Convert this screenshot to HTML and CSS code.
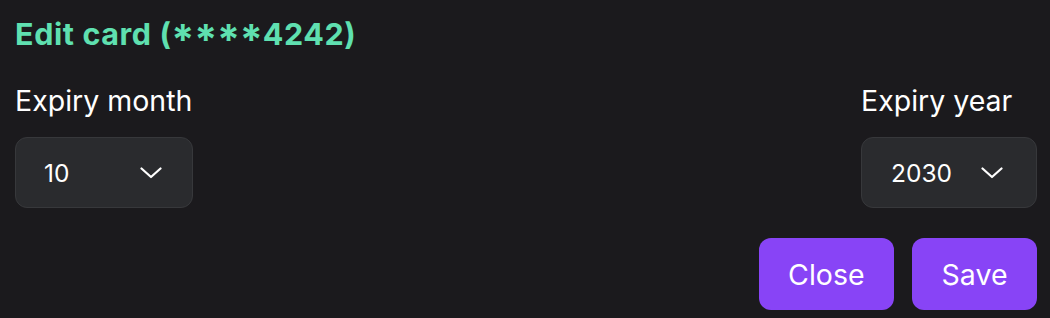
FILE: index.html
```html
<!DOCTYPE html>
<html lang="en">
<head>
<meta charset="utf-8">
<title>Edit card</title>
<link rel="stylesheet" href="styles.css">
</head>
<body>
<div class="dialog">
  <h1 class="title">Edit card (<span class="mask">****</span>4242)</h1>
  <div class="fields">
    <div class="field">
      <label class="label">Expiry month</label>
      <div class="select select-month">
        <span class="value">10</span>
        <svg class="chev" viewBox="0 0 22 12" width="22" height="12"><path d="M1.5 1.5 L11 10 L20.5 1.5" fill="none" stroke="#fff" stroke-width="2.2" stroke-linecap="round" stroke-linejoin="round"/></svg>
      </div>
    </div>
    <div class="field">
      <label class="label">Expiry year</label>
      <div class="select select-year">
        <span class="value">2030</span>
        <svg class="chev" viewBox="0 0 22 12" width="22" height="12"><path d="M1.5 1.5 L11 10 L20.5 1.5" fill="none" stroke="#fff" stroke-width="2.2" stroke-linecap="round" stroke-linejoin="round"/></svg>
      </div>
    </div>
  </div>
  <div class="actions">
    <button class="btn btn-close">Close</button>
    <button class="btn btn-save">Save</button>
  </div>
</div>
</body>
</html>
```
FILE: styles.css
```css
html, body {
  margin: 0;
  padding: 0;
  background: #1b1a1d;
}
body {
  font-family: Inter, "Noto Sans", sans-serif;
  color: #ffffff;
}
.dialog {
  padding: 14px 13px 0 15px;
  display: flex;
  flex-direction: column;
}
.title {
  margin: 0;
  font-size: 30.5px;
  font-weight: 700;
  line-height: 40px;
  letter-spacing: 0.6px;
  color: #5fe0b0;
}
.mask {
  font-feature-settings: "case" 1;
  font-size: 1.1em;
  line-height: 0;
  letter-spacing: 0.2px;
}
.fields {
  display: flex;
  justify-content: space-between;
  margin-top: 30px;
}
.field {
  display: flex;
  flex-direction: column;
  gap: 19px;
}
.label {
  font-size: 28.5px;
  line-height: 34px;
  font-weight: 400;
}
.select {
  box-sizing: border-box;
  height: 71px;
  border: 1.5px solid #37383b;
  border-radius: 12px;
  background: #2a2b2e;
  display: flex;
  align-items: center;
  justify-content: space-between;
  font-size: 24.5px;
}
.select-month {
  width: 178px;
  padding: 0 30px 0 28px;
}
.select-year {
  width: 176px;
  padding: 0 33px 0 29px;
}
.chev {
  display: block;
}
.actions {
  display: flex;
  justify-content: flex-end;
  gap: 18px;
  margin-top: 30px;
}
.btn {
  height: 72px;
  border: none;
  border-radius: 12px;
  background: #8844f6;
  color: #ffffff;
  font-family: Inter, "Noto Sans", sans-serif;
  font-size: 28.5px;
  padding: 0 29.5px;
}
```
